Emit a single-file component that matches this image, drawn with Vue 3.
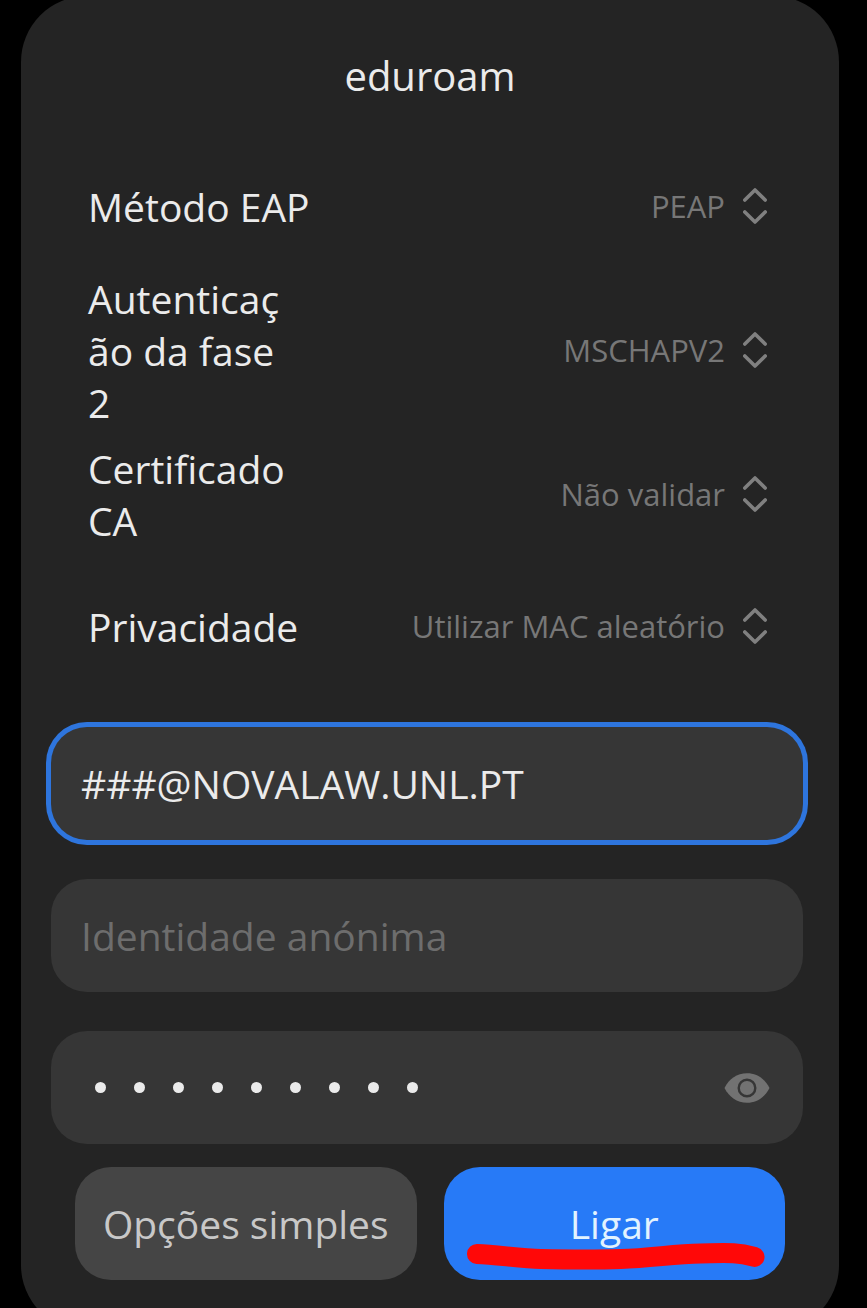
<script setup>
import { ref } from 'vue'

const rows = [
  { id: 'eap', label: 'Método EAP', value: 'PEAP' },
  { id: 'phase2', label: 'Autenticação da fase 2', value: 'MSCHAPV2', narrow: true },
  { id: 'ca', label: 'Certificado CA', value: 'Não validar', narrow: true },
  { id: 'privacy', label: 'Privacidade', value: 'Utilizar MAC aleatório' },
]

const identity = ref('###@NOVALAW.UNL.PT')
const anonymous = ref('')
const password = ref('123456789')
const visible = ref(false)
</script>

<template>
  <main class="screen">
    <form class="dialog" @submit.prevent>
      <h1 class="title">eduroam</h1>

      <div class="rows">
        <div v-for="row in rows" :key="row.id" class="row">
          <label :for="row.id" class="label" :class="{ narrow: row.narrow }">{{ row.label }}</label>
          <span class="picker">
            <select :id="row.id" class="select">
              <option>{{ row.value }}</option>
            </select>
            <svg class="chevrons" viewBox="0 0 24 36" aria-hidden="true">
              <path d="M1.8 12 12 2 22.2 12M1.8 24 12 34 22.2 24" />
            </svg>
          </span>
        </div>
      </div>

      <div class="fields">
        <input v-model="identity" class="field active" type="text" aria-label="Identidade" />
        <input v-model="anonymous" class="field" type="text" placeholder="Identidade anónima" aria-label="Identidade anónima" />
        <div class="field secret">
          <div class="entry">
            <input
              v-model="password"
              class="password"
              :class="{ masked: !visible }"
              :type="visible ? 'text' : 'password'"
              aria-label="Palavra-passe"
            />
            <span v-if="!visible" class="dots" aria-hidden="true">
              <i v-for="n in password.length" :key="n" class="dot"></i>
            </span>
          </div>
          <button class="eye" type="button" aria-label="Mostrar palavra-passe" @click="visible = !visible">
            <svg viewBox="0 0 46 30" aria-hidden="true">
              <path class="lid" d="M.5 15C5 6 13 .3 23 .3S41 6 45.500 15C41 24 33 29.700 23 29.700S5 24 .5 15Z" />
              <circle class="iris" cx="23" cy="15" r="8.300" />
            </svg>
          </button>
        </div>
      </div>

      <div class="actions">
        <button class="action simple" type="button">Opções simples</button>
        <button class="action connect" type="submit">
          Ligar
          <svg class="mark" viewBox="0 0 342 113" aria-hidden="true">
            <path d="M33 87C54 88 77 91.500 97 92Q145 93 177 92C208 91 230 87 257 86.500C284 86 292 85 311 90" />
          </svg>
        </button>
      </div>
    </form>
  </main>
</template>

<style>
body {
  margin: 0;
  background: #000;
}
</style>

<style scoped>
.screen {
  height: 100vh;
  overflow: hidden;
  display: flow-root;
  background: #000;
  color: #ebebeb;
  font-family: "Open Sans", "Noto Sans", sans-serif;
  font-size: 39px;
}
.dialog {
  box-sizing: border-box;
  margin: -4px 28px 0 21px;
  padding: 52px 36px 51px 30px;
  border-radius: 66px;
  background: #242424;
}
.title {
  margin: 0 0 37px;
  padding-left: 6px;
  font-size: 40px;
  font-weight: 400;
  line-height: 56px;
  text-align: center;
}
.row {
  display: flex;
  align-items: center;
  justify-content: space-between;
  min-height: 132px;
  padding: 0 36px 0 37px;
}
.label {
  line-height: 52px;
  white-space: nowrap;
}
.narrow {
  width: 204px;
  white-space: normal;
  word-break: break-all;
}
.picker {
  display: flex;
  align-items: center;
  gap: 18px;
  padding-bottom: 3px;
}
.select {
  appearance: none;
  margin: 0;
  padding: 0;
  border: 0;
  outline: 0;
  background: none;
  color: #777;
  font: inherit;
  font-size: 31px;
  text-align: right;
}
.chevrons {
  width: 24px;
  height: 36px;
  fill: none;
  stroke: #808080;
  stroke-width: 3.6;
  stroke-linecap: round;
  stroke-linejoin: round;
}
.fields {
  display: flex;
  flex-direction: column;
  gap: 39px;
  margin-top: 34px;
}
.field {
  box-sizing: border-box;
  width: 100%;
  height: 113px;
  margin: 0;
  padding: 0 30px;
  border: 0;
  border-radius: 36px;
  outline: 0;
  background: #363636;
  color: #ebebeb;
  font: inherit;
}
.field::placeholder {
  color: #6d6d6d;
  opacity: 1;
}
.active {
  box-shadow: 0 0 0 5px #2e75dd;
}
.secret {
  display: flex;
  align-items: center;
  padding-right: 33px;
}
.entry {
  position: relative;
  flex: 1;
  min-width: 0;
}
.password {
  display: block;
  box-sizing: border-box;
  width: 100%;
  margin: 0;
  padding: 0;
  border: 0;
  outline: 0;
  background: none;
  color: #ebebeb;
  font: inherit;
}
.masked {
  color: transparent;
}
.dots {
  position: absolute;
  inset: 0;
  display: flex;
  align-items: center;
  pointer-events: none;
}
.dot {
  width: 11px;
  height: 11px;
  margin: 0 14px;
  border-radius: 50%;
  background: #ebebeb;
}
.eye {
  display: flex;
  margin: 0;
  padding: 0;
  border: 0;
  background: none;
}
.eye svg {
  width: 46px;
  height: 30px;
}
.lid {
  fill: #727272;
}
.iris {
  fill: none;
  stroke: #363636;
  stroke-width: 2.4;
}
.actions {
  display: grid;
  grid-template-columns: 1fr 1fr;
  gap: 27px;
  margin: 23px 18px 0 24px;
}
.action {
  position: relative;
  height: 113px;
  margin: 0;
  padding: 0;
  border: 0;
  border-radius: 36px;
  font: inherit;
  white-space: nowrap;
}
.simple {
  background: #454545;
  color: #c8c8c8;
}
.connect {
  background: #277af7;
  color: #e2f3ff;
}
.mark {
  position: absolute;
  inset: 0;
  width: 100%;
  height: 100%;
  fill: none;
  stroke: #ff0808;
  stroke-width: 20;
  stroke-linecap: round;
  stroke-linejoin: round;
  pointer-events: none;
}
</style>
